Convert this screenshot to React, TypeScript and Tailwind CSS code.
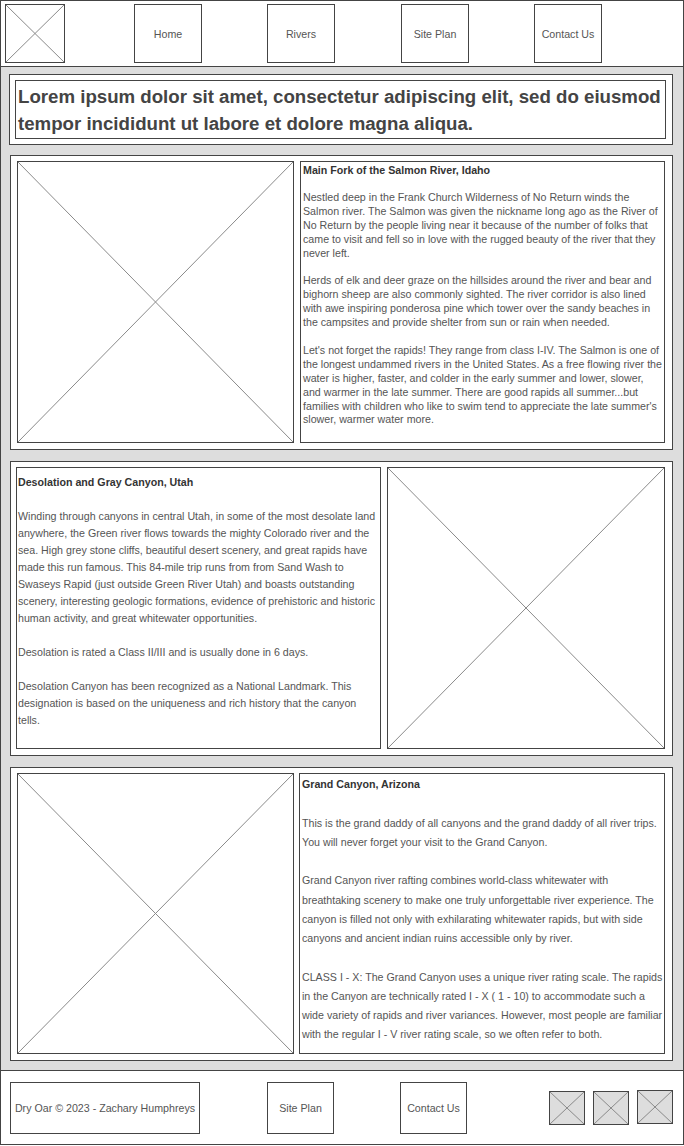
import React from "react";

function XBox({ className, fill = "bg-white" }: { className: string; fill?: string }) {
  return (
    <div className={`${className} ${fill} border border-[#444] shrink-0`}>
      <svg className="block w-full h-full" viewBox="0 0 100 100" preserveAspectRatio="none">
        <line x1="0" y1="0" x2="100" y2="100" stroke="#8a8a8a" strokeWidth="1" vectorEffect="non-scaling-stroke" />
        <line x1="100" y1="0" x2="0" y2="100" stroke="#8a8a8a" strokeWidth="1" vectorEffect="non-scaling-stroke" />
      </svg>
    </div>
  );
}

function NavBox({ label, className }: { label: string; className: string }) {
  return (
    <div className={`${className} shrink-0 border border-[#444] flex items-center justify-center text-[10.67px] text-[#555] whitespace-nowrap`}>
      {label}
    </div>
  );
}

function Lines({ lines, lh }: { lines: string[]; lh: string }) {
  return (
    <>
      {lines.map((l, i) => (
        <div key={i} className={`${lh} whitespace-nowrap`}>
          {l === "" ? "\u00a0" : l}
        </div>
      ))}
    </>
  );
}

const sec1 = [
  "",
  "Nestled deep in the Frank Church Wilderness of No Return winds the",
  "Salmon river. The Salmon was given the nickname long ago as the River of",
  "No Return by the people living near it because of the number of folks that",
  "came to visit and fell so in love with the rugged beauty of the river that they",
  "never left.",
  "",
  "Herds of elk and deer graze on the hillsides around the river and bear and",
  "bighorn sheep are also commonly sighted. The river corridor is also lined",
  "with awe inspiring ponderosa pine which tower over the sandy beaches in",
  "the campsites and provide shelter from sun or rain when needed.",
  "",
  "Let's not forget the rapids! They range from class I-IV. The Salmon is one of",
  "the longest undammed rivers in the United States. As a free flowing river the",
  "water is higher, faster, and colder in the early summer and lower, slower,",
  "and warmer in the late summer. There are good rapids all summer...but",
  "families with children who like to swim tend to appreciate the late summer's",
  "slower, warmer water more.",
];

const sec2 = [
  "",
  "Winding through canyons in central Utah, in some of the most desolate land",
  "anywhere, the Green river flows towards the mighty Colorado river and the",
  "sea. High grey stone cliffs, beautiful desert scenery, and great rapids have",
  "made this run famous. This 84-mile trip runs from from Sand Wash to",
  "Swaseys Rapid (just outside Green River Utah) and boasts outstanding",
  "scenery, interesting geologic formations, evidence of prehistoric and historic",
  "human activity, and great whitewater opportunities.",
  "",
  "Desolation is rated a Class II/III and is usually done in 6 days.",
  "",
  "Desolation Canyon has been recognized as a National Landmark. This",
  "designation is based on the uniqueness and rich history that the canyon",
  "tells.",
];

const sec3 = [
  "",
  "This is the grand daddy of all canyons and the grand daddy of all river trips.",
  "You will never forget your visit to the Grand Canyon.",
  "",
  "Grand Canyon river rafting combines world-class whitewater with",
  "breathtaking scenery to make one truly unforgettable river experience. The",
  "canyon is filled not only with exhilarating whitewater rapids, but with side",
  "canyons and ancient indian ruins accessible only by river.",
  "",
  "CLASS I - X: The Grand Canyon uses a unique river rating scale. The rapids",
  "in the Canyon are technically rated I - X ( 1 - 10) to accommodate such a",
  "wide variety of rapids and river variances. However, most people are familiar",
  "with the regular I - V river rating scale, so we often refer to both.",
];

export default function App() {
  return (
    <div className="w-[684px] bg-white font-['Liberation_Sans',Arial,sans-serif]">
      {/* Header */}
      <header className="h-[67px] border border-[#444] flex items-start pt-[3px] pl-[4px]">
        <XBox className="w-[60px] h-[59px]" />
        <NavBox label="Home" className="ml-[69px] w-[68px] h-[59px]" />
        <NavBox label="Rivers" className="ml-[65px] w-[68px] h-[59px]" />
        <NavBox label="Site Plan" className="ml-[66px] w-[68px] h-[59px]" />
        <NavBox label="Contact Us" className="ml-[65px] w-[68px] h-[59px]" />
      </header>

      {/* Main */}
      <main className="h-[1003px] bg-[#ddd] border-x border-[#444] pt-[7px] flex flex-col items-start">
        <div className="ml-[8px] w-[664px] h-[71px] border border-[#444] bg-white pl-[5px] pt-[5px]">
          <div className="w-[651px] h-[59px] border border-[#444] pl-[2px] pt-[2px] text-[18.67px] font-bold text-[#444] leading-[27px]">
            <div className="whitespace-nowrap">Lorem ipsum dolor sit amet, consectetur adipiscing elit, sed do eiusmod</div>
            <div className="whitespace-nowrap">tempor incididunt ut labore et dolore magna aliqua.</div>
          </div>
        </div>

        {/* Section 1 */}
        <section className="mt-[10px] ml-[9px] w-[663px] h-[295px] border border-[#444] bg-white flex items-start pl-[6px] pt-[5px]">
          <XBox className="w-[277px] h-[282px]" />
          <div className="ml-[6px] w-[365px] h-[282px] border border-[#444] pl-[2px] pt-[1px] text-[10.67px] text-[#555] overflow-hidden">
            <div className="leading-[14px] font-bold text-[#333] whitespace-nowrap">Main Fork of the Salmon River, Idaho</div>
            <Lines lines={sec1} lh="leading-[13.9px]" />
          </div>
        </section>

        {/* Section 2 */}
        <section className="mt-[11px] ml-[9px] w-[663px] h-[295px] border border-[#444] bg-white flex items-start pl-[5px] pt-[5px]">
          <div className="w-[365px] h-[282px] border border-[#444] pl-[1px] pt-[6px] text-[10.67px] text-[#555] overflow-hidden">
            <div className="leading-[17px] font-bold text-[#333] whitespace-nowrap">Desolation and Gray Canyon, Utah</div>
            <Lines lines={sec2} lh="leading-[17px]" />
          </div>
          <XBox className="ml-[6px] w-[278px] h-[282px]" />
        </section>

        {/* Section 3 */}
        <section className="mt-[11px] ml-[9px] w-[663px] h-[294px] border border-[#444] bg-white flex items-start pl-[6px] pt-[5px]">
          <XBox className="w-[277px] h-[281px]" />
          <div className="ml-[5px] w-[366px] h-[281px] border border-[#444] pl-[2px] pt-[1px] text-[10.67px] text-[#555] overflow-hidden">
            <div className="leading-[19.25px] font-bold text-[#333] whitespace-nowrap">Grand Canyon, Arizona</div>
            <Lines lines={sec3} lh="leading-[19.25px]" />
          </div>
        </section>
      </main>

      {/* Footer */}
      <footer className="h-[75px] border border-[#444] flex items-start pt-[11px] pl-[9px]">
        <NavBox label="Dry Oar © 2023 - Zachary Humphreys" className="w-[190px] h-[52px]" />
        <NavBox label="Site Plan" className="ml-[67px] w-[67px] h-[52px]" />
        <NavBox label="Contact Us" className="ml-[66px] w-[67px] h-[52px]" />
        <XBox className="ml-[82px] mt-[9px] w-[36px] h-[34px]" fill="bg-[#ddd]" />
        <XBox className="ml-[8px] mt-[9px] w-[36px] h-[34px]" fill="bg-[#ddd]" />
        <XBox className="ml-[8px] mt-[8px] w-[36px] h-[34px]" fill="bg-[#ddd]" />
      </footer>
    </div>
  );
}
